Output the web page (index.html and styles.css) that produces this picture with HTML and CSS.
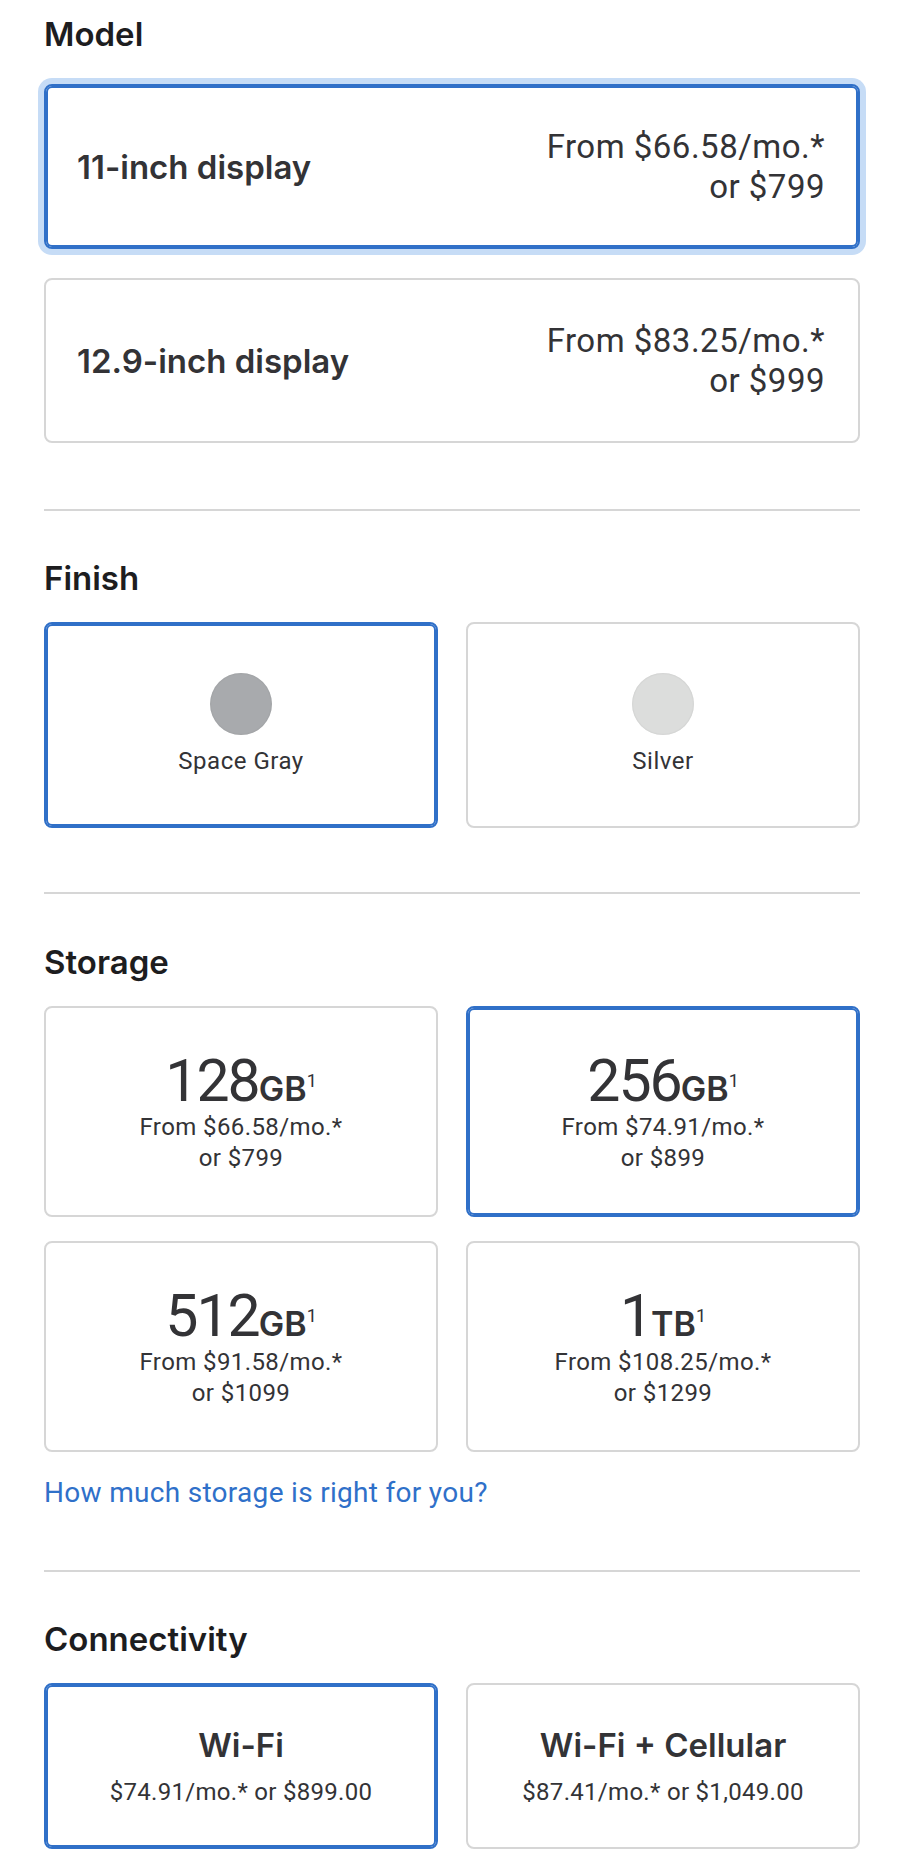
FILE: index.html
```html
<!DOCTYPE html>
<html lang="en">
<head>
    <meta charset="UTF-8">
    <meta name="viewport" content="width=device-width, initial-scale=1.0">
    <title>Buy iPad Pro</title>
    <link rel="stylesheet" href="styles.css">
</head>
<body>
    <div class="config">
        <section class="section section-first">
            <h2 class="section-title">Model</h2>
            <div class="option-list">
                <div class="option model-option selected focused">
                    <span class="model-name">11-inch display</span>
                    <span class="model-price">From $66.58/mo.*<br>or $799</span>
                </div>
                <div class="option model-option">
                    <span class="model-name">12.9-inch display</span>
                    <span class="model-price">From $83.25/mo.*<br>or $999</span>
                </div>
            </div>
        </section>

        <section class="section">
            <h2 class="section-title">Finish</h2>
            <div class="option-grid">
                <div class="option finish-option selected">
                    <span class="swatch swatch-gray"></span>
                    <span class="finish-name">Space Gray</span>
                </div>
                <div class="option finish-option">
                    <span class="swatch swatch-silver"></span>
                    <span class="finish-name">Silver</span>
                </div>
            </div>
        </section>

        <section class="section section-storage">
            <h2 class="section-title">Storage</h2>
            <div class="option-grid storage-grid">
                <div class="option storage-option">
                    <div class="capacity">128<span class="unit">GB<sup>1</sup></span></div>
                    <div class="storage-price">From $66.58/mo.*<br>or $799</div>
                </div>
                <div class="option storage-option selected">
                    <div class="capacity">256<span class="unit">GB<sup>1</sup></span></div>
                    <div class="storage-price">From $74.91/mo.*<br>or $899</div>
                </div>
                <div class="option storage-option">
                    <div class="capacity">512<span class="unit">GB<sup>1</sup></span></div>
                    <div class="storage-price">From $91.58/mo.*<br>or $1099</div>
                </div>
                <div class="option storage-option">
                    <div class="capacity">1<span class="unit">TB<sup>1</sup></span></div>
                    <div class="storage-price">From $108.25/mo.*<br>or $1299</div>
                </div>
            </div>
            <a class="help-link" href="#">How much storage is right for you?</a>
        </section>

        <section class="section section-last">
            <h2 class="section-title">Connectivity</h2>
            <div class="option-grid">
                <div class="option connect-option selected">
                    <span class="connect-name">Wi-Fi</span>
                    <span class="connect-price">$74.91/mo.* or $899.00</span>
                </div>
                <div class="option connect-option">
                    <span class="connect-name">Wi-Fi + Cellular</span>
                    <span class="connect-price">$87.41/mo.* or $1,049.00</span>
                </div>
            </div>
        </section>
    </div>
</body>
</html>
```

FILE: styles.css
```css
body {
    margin: 0;
    background: #fff;
    color: #333336;
    font-family: Roboto, 'Liberation Sans', sans-serif;
}
.config {
    width: 816px;
    padding-left: 44px;
}
.section {
    padding: 47px 0 64px;
    border-bottom: 2px solid #d6d6d6;
}
.section-first {
    padding-top: 14px;
    padding-bottom: 66px;
}
.section-first .section-title {
    margin-bottom: 30px;
}
.section-storage {
    padding-top: 48px;
    padding-bottom: 60px;
}
.section-last {
    border-bottom: none;
    padding-bottom: 24px;
}
.section-title {
    margin: 0 0 24px;
    font-family: Inter, 'Liberation Sans', sans-serif;
    font-size: 33px;
    font-weight: 600;
    line-height: 40px;
    color: #1d1d1f;
}
.option {
    box-sizing: border-box;
    border: 2px solid #d6d6d6;
    border-radius: 8px;
    background: #fff;
}
.option.selected {
    border-color: #3070c8;
    box-shadow: inset 0 0 0 2px #3070c8;
}
.option.focused {
    box-shadow: inset 0 0 0 2px #3070c8, 0 0 0 6px #c6dcf6;
}
.option-list {
    display: flex;
    flex-direction: column;
    gap: 29px;
}
.option-grid {
    display: grid;
    grid-template-columns: 1fr 1fr;
    column-gap: 28px;
    row-gap: 24px;
}

/* model */
.model-option {
    height: 165px;
    display: flex;
    align-items: center;
    justify-content: space-between;
    padding: 0 33px 0 31px;
}
.model-name {
    font-family: Inter, 'Liberation Sans', sans-serif;
    font-size: 33px;
    font-weight: 600;
}
.model-price {
    font-size: 33px;
    line-height: 40px;
    letter-spacing: 0.5px;
    text-align: right;
}

/* finish */
.finish-option {
    height: 206px;
    display: flex;
    flex-direction: column;
    align-items: center;
    justify-content: center;
    gap: 12px;
    padding-bottom: 2px;
}
.swatch {
    width: 62px;
    height: 62px;
    border-radius: 50%;
    box-shadow: inset 0 0 2px rgba(0, 0, 0, 0.12);
}
.swatch-gray {
    background: #a8aaad;
}
.swatch-silver {
    background: #dcdddc;
}
.finish-name {
    font-size: 24px;
    line-height: 28px;
    letter-spacing: 0.5px;
}

/* storage */
.storage-option {
    height: 211px;
    display: flex;
    flex-direction: column;
    align-items: center;
    justify-content: center;
    text-align: center;
}
.capacity {
    font-size: 59px;
    line-height: 62px;
    letter-spacing: -2px;
}
.unit {
    font-family: Inter, 'Liberation Sans', sans-serif;
    font-size: 34px;
    font-weight: 600;
    line-height: 1;
    letter-spacing: 0;
}
.unit sup {
    font-family: Roboto, sans-serif;
    font-size: 18px;
    font-weight: 400;
    line-height: 0;
    vertical-align: 14px;
}
.storage-price {
    font-size: 24px;
    line-height: 31px;
    letter-spacing: 0.4px;
}
.help-link {
    display: inline-block;
    margin-top: 24px;
    font-size: 28px;
    line-height: 34px;
    letter-spacing: 0.3px;
    color: #2f70c9;
    text-decoration: none;
}

/* connectivity */
.connect-option {
    height: 166px;
    display: flex;
    flex-direction: column;
    align-items: center;
    justify-content: center;
    gap: 14px;
}
.connect-name {
    font-family: Inter, 'Liberation Sans', sans-serif;
    font-size: 33px;
    font-weight: 600;
    line-height: 38px;
}
.connect-price {
    font-size: 24px;
    line-height: 28px;
    letter-spacing: 0.3px;
}
```
